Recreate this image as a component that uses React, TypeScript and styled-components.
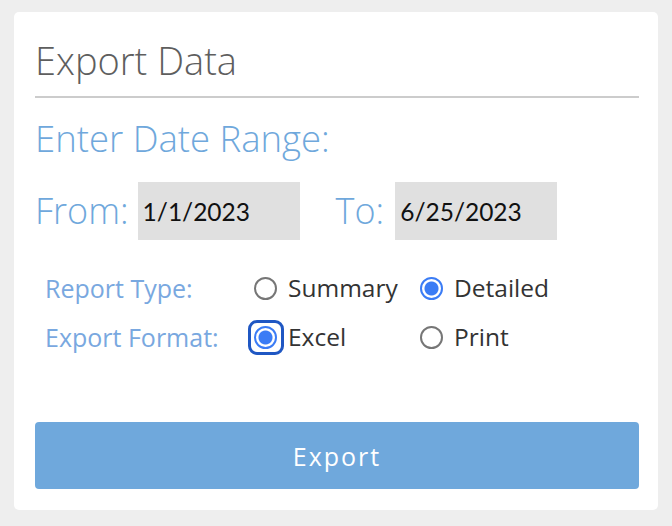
import React, { useState } from "react";
import styled, { createGlobalStyle, css } from "styled-components";

const Global = createGlobalStyle`
  html, body { margin: 0; padding: 0; background: #eeeeee; }
  body { font-family: "Open Sans", "Liberation Sans", sans-serif; }
`;

const Page = styled.div`
  padding: 12px 14px 16px 14px;
`;

const Card = styled.div`
  background: #ffffff;
  border-radius: 5px;
  padding: 24px 19px 21px 21px;
  display: flex;
  flex-direction: column;
`;

const Title = styled.h1`
  margin: 0;
  font-family: "Open Sans", sans-serif;
  font-weight: 300;
  font-size: 38px;
  line-height: 48px;
  color: #5e5e5e;
  padding-bottom: 12px;
  border-bottom: 2px solid #cccccc;
`;

const Subtitle = styled.h2`
  margin: 18px 0 0 0;
  font-family: "Open Sans", sans-serif;
  font-weight: 300;
  font-size: 36.5px;
  line-height: 44px;
  color: #6fa8dc;
`;

const DateRow = styled.div`
  display: flex;
  align-items: center;
  margin-top: 22px;
`;

const DateLabel = styled.label<{ $gapAfter?: number }>`
  font-family: "Open Sans", sans-serif;
  font-weight: 300;
  font-size: 36px;
  line-height: 58px;
  color: #6fa8dc;
  margin-right: ${(p) => p.$gapAfter ?? 9}px;
`;

const DateInput = styled.input<{ $gapAfter?: number }>`
  box-sizing: border-box;
  width: 162px;
  height: 58px;
  border: none;
  border-radius: 0;
  background: #e0e0e0;
  padding: 0 5px;
  font-family: "Lato", sans-serif;
  font-size: 24.5px;
  color: #111;
  outline: none;
  margin-right: ${(p) => p.$gapAfter ?? 0}px;
`;

const Options = styled.div`
  display: grid;
  grid-template-columns: 209px 166px auto;
  row-gap: 11px;
  margin-top: 29px;
  padding-left: 10px;
  align-items: center;
`;

const OptLabel = styled.div`
  font-family: "Open Sans", sans-serif;
  font-size: 25px;
  line-height: 38px;
  color: #79a8e0;
`;

const Choice = styled.label`
  display: flex;
  align-items: center;
  gap: 11px;
  font-family: "Open Sans", sans-serif;
  font-size: 24.5px;
  line-height: 38px;
  color: #333;
  cursor: pointer;
`;

const RadioWrap = styled.span<{ $focused?: boolean }>`
  position: relative;
  display: inline-flex;
  ${(p) =>
    p.$focused &&
    css`
      &::after {
        content: "";
        position: absolute;
        left: -6px;
        top: -6px;
        right: -7px;
        bottom: -6px;
        border: 3px solid #1f57c3;
        border-radius: 9px;
        box-sizing: border-box;
      }
    `}
`;

const Radio = styled.input`
  appearance: none;
  margin: 0;
  box-sizing: border-box;
  width: 23px;
  height: 23px;
  border-radius: 50%;
  border: 2px solid #767676;
  background: #fff;
  cursor: pointer;
  &:checked {
    border-color: #3b7cf5;
    background: radial-gradient(circle, #3b7cf5 0 6.5px, #fff 7.5px);
  }
`;

const ExportButton = styled.button`
  margin-top: 66px;
  height: 67px;
  border: none;
  border-radius: 4px;
  background: #6fa8dc;
  color: #fff;
  font-family: "Open Sans", sans-serif;
  font-size: 25px;
  letter-spacing: 2px;
  cursor: pointer;
`;

type OptProps = {
  name: string;
  value: string;
  label: string;
  checked: boolean;
  focused?: boolean;
  onChange: (v: string) => void;
};

function Option({ name, value, label, checked, focused, onChange }: OptProps) {
  return (
    <Choice>
      <RadioWrap $focused={focused}>
        <Radio
          type="radio"
          name={name}
          value={value}
          checked={checked}
          onChange={() => onChange(value)}
        />
      </RadioWrap>
      {label}
    </Choice>
  );
}

export default function App() {
  const [from, setFrom] = useState("1/1/2023");
  const [to, setTo] = useState("6/25/2023");
  const [type, setType] = useState("detailed");
  const [format, setFormat] = useState("excel");

  return (
    <Page>
      <Global />
      <Card>
        <Title>Export Data</Title>
        <Subtitle>Enter Date Range:</Subtitle>
        <DateRow>
          <DateLabel>From:</DateLabel>
          <DateInput value={from} onChange={(e) => setFrom(e.target.value)} $gapAfter={36} />
          <DateLabel $gapAfter={11}>To:</DateLabel>
          <DateInput value={to} onChange={(e) => setTo(e.target.value)} />
        </DateRow>
        <Options>
          <OptLabel>Report Type:</OptLabel>
          <Option name="type" value="summary" label="Summary" checked={type === "summary"} onChange={setType} />
          <Option name="type" value="detailed" label="Detailed" checked={type === "detailed"} onChange={setType} />
          <OptLabel>Export Format:</OptLabel>
          <Option name="format" value="excel" label="Excel" checked={format === "excel"} focused onChange={setFormat} />
          <Option name="format" value="print" label="Print" checked={format === "print"} onChange={setFormat} />
        </Options>
        <ExportButton>Export</ExportButton>
      </Card>
    </Page>
  );
}
